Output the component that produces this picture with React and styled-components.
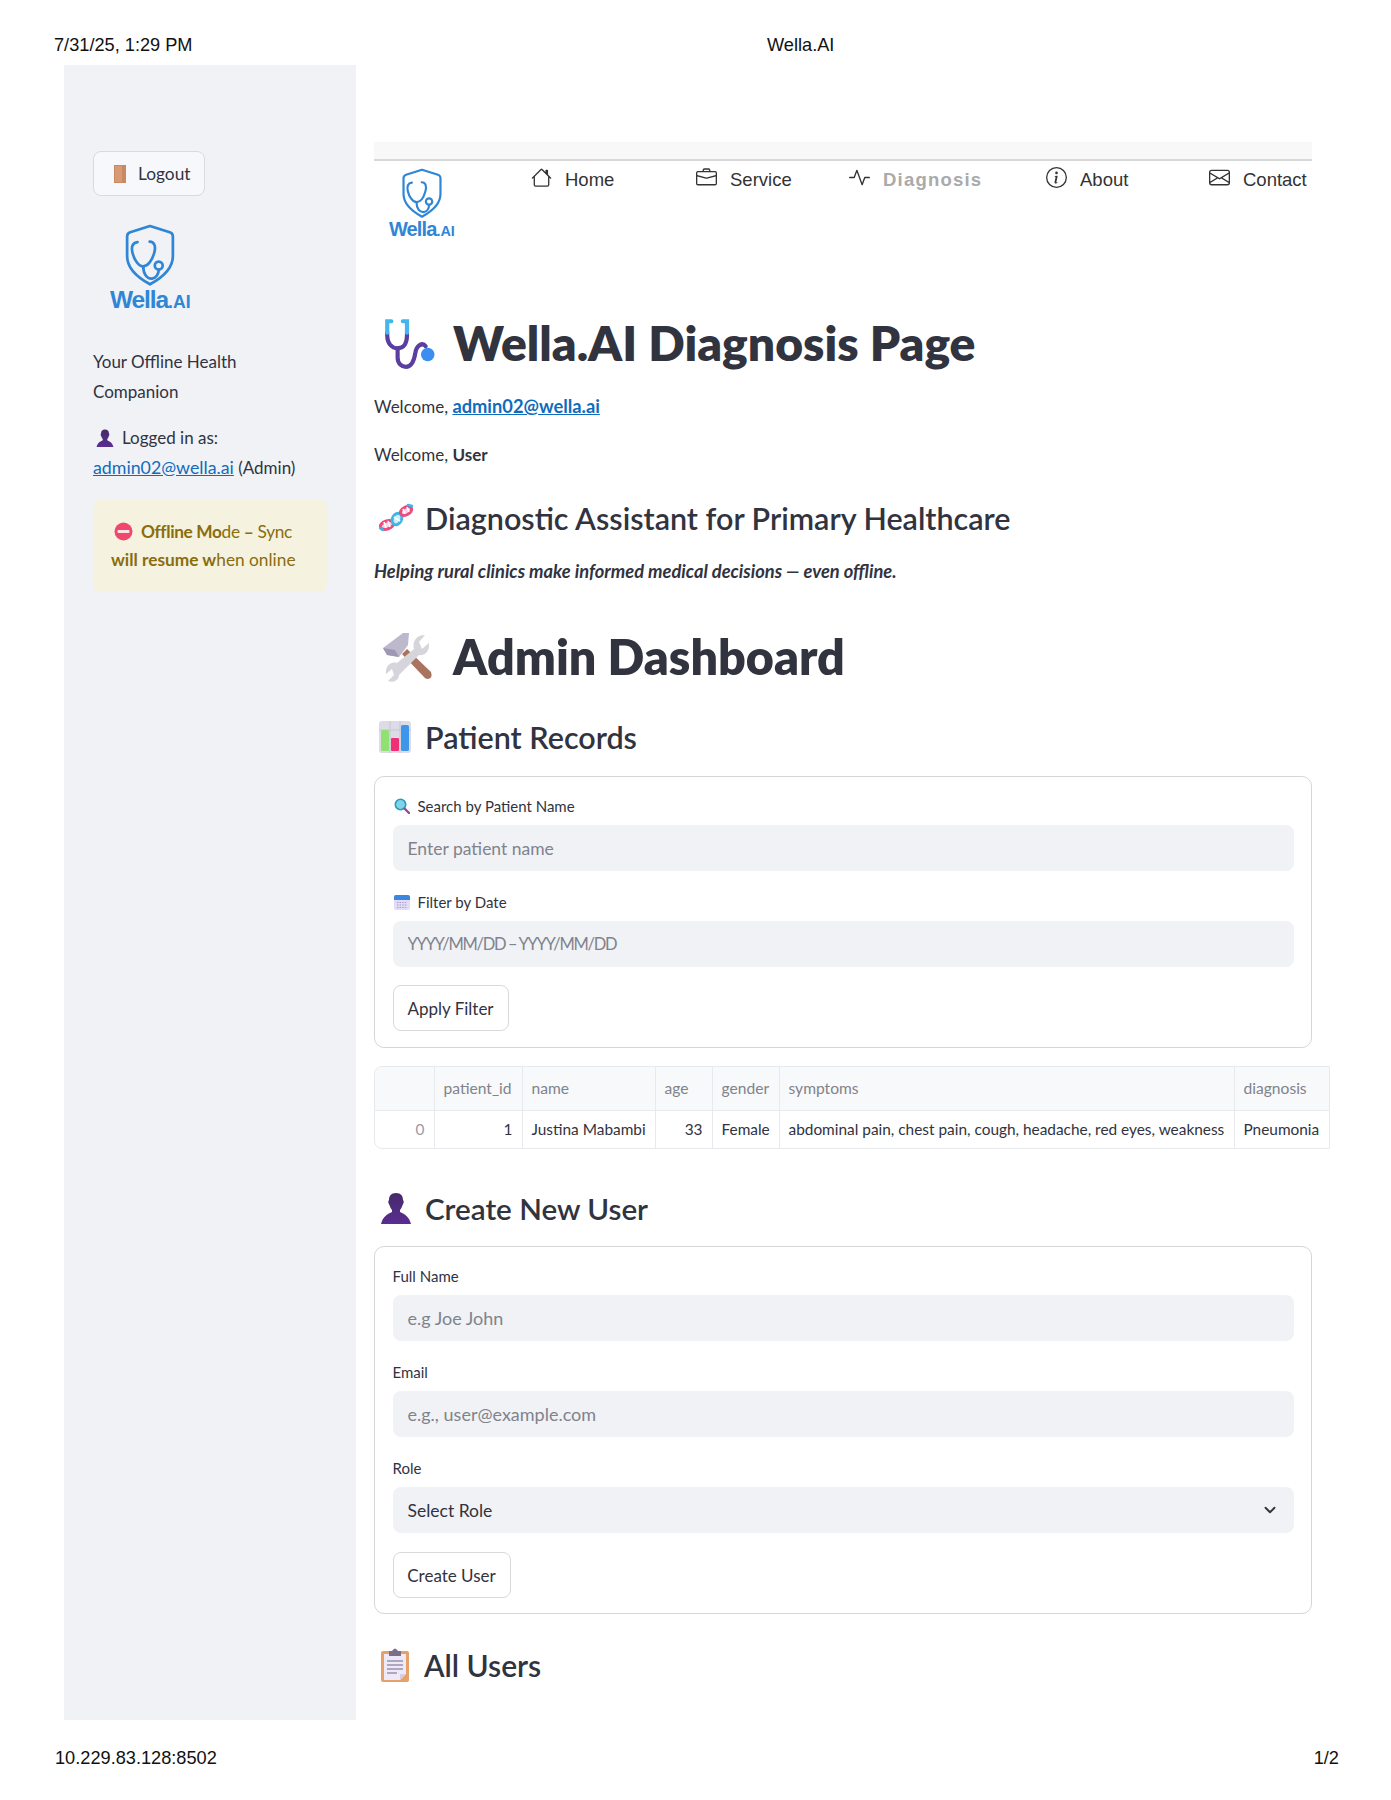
import React from "react";
import styled, { createGlobalStyle } from "styled-components";
import { BsHouse, BsBriefcase, BsActivity, BsInfoCircle, BsEnvelope } from "react-icons/bs";
import { ChevronDown } from "lucide-react";

const GlobalStyle = createGlobalStyle`
  html, body {
    margin: 0;
    padding: 0;
    background: #fff;
    color: #31333f;
    font-family: "Lato", "Noto Sans", sans-serif;
  }
  * { box-sizing: border-box; }
`;

const Page = styled.div`
  width: 1391px;
  height: 1800px;
  overflow: hidden;
`;

const PrintBar = styled.div`
  height: 65px;
  padding: 34px 0 0 54px;
  display: grid;
  grid-template-columns: 713px auto;
  font: 18.2px/22px "Liberation Sans", Arial, sans-serif;
  color: #111;
`;

const PrintFoot = styled.div`
  margin-top: 27px;
  padding: 0 52px 0 55px;
  display: flex;
  justify-content: space-between;
  font: 18.2px/22px "Liberation Sans", Arial, sans-serif;
  color: #111;
`;

const Shell = styled.div`
  margin-left: 64px;
  display: flex;
  height: 1655px;
`;

const Sidebar = styled.aside`
  width: 292px;
  flex: none;
  background: #f0f2f6;
  padding: 86px 29px 0;
  font-size: 17px;
  line-height: 30px;
`;

const LogoutButton = styled.button`
  display: flex;
  align-items: center;
  gap: 12px;
  width: 112px;
  height: 45px;
  padding: 0 0 0 20px;
  background: #f7f8fb;
  border: 1px solid #d9dae0;
  border-radius: 8px;
  color: #31333f;
  font: 17.3px "Lato", sans-serif;
`;

const LogoBox = styled.div`
  display: inline-flex;
  flex-direction: column;
  align-items: center;
  margin: ${(p) => p.$margin};
  color: #2f86d6;
  font-family: "Liberation Sans", Arial, sans-serif;
  font-weight: 700;
  font-size: ${(p) => p.$size}px;
  line-height: 1.15;
  letter-spacing: -0.045em;
`;

const LogoAi = styled.span`
  font-size: 0.72em;
  letter-spacing: 0;
`;

const SideText = styled.p`
  margin: ${(p) => p.$top}px 0 0;
`;

const RowIcon = styled.span`
  display: inline-block;
  line-height: 0;
  vertical-align: -3px;
  margin: 0 8px 0 3px;
  svg { display: block; }
`;

const TextLink = styled.a`
  color: #0f6cbd;
  text-decoration: underline;
  font-size: ${(p) => p.$size}px;
  line-height: 1;
  font-weight: ${(p) => (p.$strong ? 700 : 400)};
`;

const OfflineBox = styled.div`
  margin-top: 17px;
  height: 92px;
  padding: 18px 18px;
  background: #f5f2df;
  border-radius: 8px;
  color: #8a6d0c;
  font-size: 17.3px;
  line-height: 28px;
`;

const OfflineLead = styled.span`
  letter-spacing: -0.35px;
`;

const Main = styled.main`
  width: 956px;
  margin-left: 18px;
  padding-top: 77px;
`;

const TopStrip = styled.div`
  width: 938px;
  height: 19px;
  background: #f8f8f8;
  border-bottom: 2px solid #d8d8d8;
`;

const NavRow = styled.nav`
  width: 938px;
  height: 151px;
  display: grid;
  grid-template-columns: 157px 165px 153px 197px 163px 1fr;
  font: 18.5px/22px "Liberation Sans", Arial, sans-serif;
  color: #333;
`;

const NavLogo = styled.div`
  padding: 7px 0 0 15px;
`;

const NavItem = styled.a`
  display: flex;
  align-items: flex-start;
  gap: 13px;
  height: 40px;
  padding-top: 8px;
  color: ${(p) => (p.$active ? "#aaa" : "#333")};
  font-weight: ${(p) => (p.$active ? 700 : 400)};
  letter-spacing: ${(p) => (p.$active ? "1.2px" : 0)};
  svg { color: #333; flex: none; margin-top: -2px; }
`;

const Heading = styled.h1`
  display: flex;
  align-items: center;
  height: ${(p) => p.$height}px;
  margin: ${(p) => p.$top}px 0 0;
  padding-left: ${(p) => p.$indent}px;
  gap: ${(p) => p.$gap}px;
  font-size: ${(p) => p.$size}px;
  font-weight: ${(p) => p.$weight};
  color: #31333f;
  white-space: nowrap;
`;

const Line = styled.p`
  margin: ${(p) => p.$top}px 0 0;
  font-size: ${(p) => (p.$italic ? 18.3 : 17)}px;
  line-height: 28px;
  font-style: ${(p) => (p.$italic ? "italic" : "normal")};
  font-weight: ${(p) => (p.$italic ? 700 : 400)};
`;

const Card = styled.section`
  width: 938px;
  height: ${(p) => p.$height}px;
  margin-top: ${(p) => p.$top}px;
  padding: ${(p) => p.$pad}px 17px 0 17.5px;
  border: 1.5px solid #d5d6da;
  border-radius: 10px;
`;

const Label = styled.label`
  display: flex;
  align-items: center;
  gap: 8px;
  height: 22px;
  margin-bottom: 8px;
  padding-left: ${(p) => (p.$icon ? 1 : 0)}px;
  font-size: 15px;
`;

const Field = styled.div`
  margin-bottom: ${(p) => p.$gap}px;
`;

const TextInput = styled.input`
  display: block;
  width: 100%;
  height: 46px;
  padding: 0 15px;
  border: 0;
  outline: 0;
  border-radius: 8px;
  background: #f0f2f6;
  color: #31333f;
  font: ${(p) => p.$size || 18}px "Lato", sans-serif;
  letter-spacing: ${(p) => p.$spacing || 0}px;
  &::placeholder { color: #80838c; opacity: 1; }
`;

const SelectBox = styled.div`
  display: flex;
  align-items: center;
  justify-content: space-between;
  height: 46px;
  padding: 0 15px;
  border-radius: 8px;
  background: #f0f2f6;
  font-size: 17.5px;
`;

const PlainButton = styled.button`
  display: block;
  width: ${(p) => p.$width}px;
  height: 46px;
  padding: 0;
  background: #fff;
  border: 1.5px solid #d8d9dd;
  border-radius: 8px;
  color: #31333f;
  font: 17px "Lato", sans-serif;
`;

const TableWrap = styled.div`
  width: 956px;
  margin-top: 18px;
  border: 1px solid #e7e9ed;
  border-radius: 8px 0 0 8px;
  overflow: hidden;
`;

const Table = styled.table`
  width: 955px;
  table-layout: fixed;
  border-collapse: collapse;
`;

const Th = styled.th`
  height: 43px;
  padding: 0 9px;
  background: #f7f9fb;
  border-right: 1px solid #e7e9ed;
  border-bottom: 1px solid #e7e9ed;
  color: #80838c;
  font-size: 15.6px;
  font-weight: 400;
  text-align: left;
  white-space: nowrap;
  &:last-child { border-right: 0; }
`;

const Td = styled.td`
  height: 38px;
  padding: 0 9px;
  border-right: 1px solid #e7e9ed;
  color: ${(p) => (p.$muted ? "#9a9ca4" : "#31333f")};
  font-size: 15.4px;
  text-align: ${(p) => (p.$right ? "right" : "left")};
  white-space: nowrap;
  &:last-child { border-right: 0; }
`;

const Shield = ({ width }) => (
  <svg width={width} viewBox="0 0 50 60" fill="none" stroke="#2f86d6" strokeWidth="2.6" strokeLinecap="round" strokeLinejoin="round">
    <path d="M25 2 L44 8 Q47 9 47 12 V31 C47 43 36 52 25 58 C14 52 3 43 3 31 V12 Q3 9 6 8 Z" />
    <path d="M13 17.5 C8 18 7 22 8 27 C9.5 34 14 40.7 18.5 40.7 C23 40.7 27 35 29 28 C31 21 29 17 24.7 17" />
    <path d="M18.5 40.7 C18.5 48 22 53 27 52.5 C31 52 33.4 48 33.4 44" />
    <circle cx="33.4" cy="40" r="3.8" />
  </svg>
);

const Logo = ({ width, size, margin }) => (
  <LogoBox $size={size} $margin={margin}>
    <Shield width={width} />
    <span>
      Wella<LogoAi>.AI</LogoAi>
    </span>
  </LogoBox>
);

const DoorIcon = () => (
  <svg width="12" height="18" viewBox="0 0 12 18">
    <rect width="12" height="18" fill="#c98a62" />
    <rect x="1" y="1" width="7" height="16" fill="#d79a74" />
  </svg>
);

const PersonIcon = ({ size }) => (
  <svg width={size} height={size} viewBox="0 0 32 32">
    <defs>
      <linearGradient id="personFill" x1="0" y1="0" x2="0" y2="1">
        <stop offset="0" stopColor="#452a6b" />
        <stop offset="1" stopColor="#5a2d8f" />
      </linearGradient>
    </defs>
    <path
      fill="url(#personFill)"
      d="M16 1 C21 1 23 4 23 8 C24 9 24 11 23 12 C22 15 21 17 20 18 V20 C24 22 29 24 31 32 H1 C3 24 8 22 12 20 V18 C11 17 10 15 9 12 C8 11 8 9 9 8 C9 4 11 1 16 1 Z"
    />
  </svg>
);

const NoEntryIcon = () => (
  <svg width="19" height="19" viewBox="0 0 19 19">
    <circle cx="9.5" cy="9.5" r="9" fill="#f0476e" />
    <rect x="3.5" y="8" width="12" height="3" rx="1" fill="#fbe3e6" />
  </svg>
);

const StethIcon = () => (
  <svg width="54" height="54" viewBox="8 5 52 52" fill="none" strokeLinecap="round">
    <path d="M14 22 V25 C14 32 18 37 24 37 C30 37 33 32 33 25 V22" stroke="#5b3fa0" strokeWidth="4" />
    <path d="M14 22 V11 H18 M33 22 V11 H29" stroke="#45b5ee" strokeWidth="4" />
    <path d="M24 37 V46 C24 52 28 55 32 55 C38 55 40 48 41 42 C42 34 48 31 51 35" stroke="#5b3fa0" strokeWidth="4" />
    <circle cx="53" cy="43" r="6.5" fill="#3b8df2" />
  </svg>
);

const DnaIcon = () => (
  <svg width="34" height="32" viewBox="0 0 34 32" fill="none">
    <ellipse cx="8" cy="23" rx="7" ry="4" transform="rotate(-20 8 23)" stroke="#ef4a7d" strokeWidth="3" fill="#f9d3df" />
    <ellipse cx="18" cy="17" rx="6" ry="4.5" transform="rotate(-60 18 17)" stroke="#3fb6e8" strokeWidth="3" fill="#cdeefa" />
    <ellipse cx="27" cy="9" rx="6" ry="3.8" transform="rotate(-30 27 9)" stroke="#ef4a7d" strokeWidth="3" fill="#f9d3df" />
    <path d="M5 20 L7 26 M9 19 L11 25 M15 15 L21 19 M24 7 L26 12 M28 5 L30 10" stroke="#fff" strokeWidth="1.6" />
    <path d="M29 3 L33 4 M1 26 L4 28" stroke="#3fb6e8" strokeWidth="2.6" strokeLinecap="round" />
  </svg>
);

const ToolsIcon = () => (
  <svg width="54" height="54" viewBox="6 4 54 54">
    <path d="M27 29 L32 24 L56 47 Q58 53 53 54 Q50 54 49 52 Z" fill="#a9745f" />
    <path d="M8 23 L28 8 L34 8 L33 20 L24 32 L12 30 Z" fill="#bdb8cc" />
    <path d="M8 23 L12 30 L24 32 L20 25 Z" fill="#9e99b2" />
    <path
      d="M39 24 C37 17 41 10 50 10 L44 17 L47 24 L54 18 C55 26 50 31 44 30 L24 50 C24 55 19 58 13 56 L19 50 L17 44 L11 49 C10 42 15 36 22 38 Z"
      fill="#d6d5dc"
    />
  </svg>
);

const ChartIcon = () => (
  <svg width="32" height="32" viewBox="0 0 32 32">
    <rect width="32" height="32" rx="3" fill="#dcdbe6" />
    <path d="M11 0 V32 M21 0 V32 M0 9 H32" stroke="#c6c5d4" strokeWidth="1" />
    <rect x="2" y="9" width="8" height="21" rx="1.5" fill="#8fe26f" />
    <rect x="12" y="17" width="8" height="13" rx="1" fill="#ee2f76" />
    <rect x="22" y="4" width="8" height="26" rx="1.5" fill="#3d96ea" />
  </svg>
);

const SearchIcon = () => (
  <svg width="16" height="16" viewBox="0 0 16 16" fill="none">
    <circle cx="6.5" cy="6.5" r="5.2" fill="#7fd3ea" stroke="#2d9bb8" strokeWidth="1.6" />
    <path d="M10.5 10.5 L15 15" stroke="#8e4a9c" strokeWidth="2.4" strokeLinecap="round" />
  </svg>
);

const CalendarIcon = () => (
  <svg width="16" height="16" viewBox="0 0 16 16">
    <rect y="1" width="16" height="15" rx="2" fill="#e3dcf5" />
    <path d="M0 6 V3 Q0 1 2 1 H14 Q16 1 16 3 V6 Z" fill="#3d86e0" />
    <path d="M3 8.5 H13 M3 11 H13 M3 13.5 H13" stroke="#a79ad0" strokeWidth="1.2" strokeDasharray="1.4 1.2" />
  </svg>
);

const ClipboardIcon = () => (
  <svg width="30" height="34" viewBox="0 0 30 34">
    <rect x="1" y="3" width="28" height="31" rx="2" fill="#e6a06a" />
    <path d="M4 6 H26 V26 L20 32 H4 Z" fill="#eee9f6" />
    <path d="M20 32 L26 26 H20 Z" fill="#d5cde4" />
    <path d="M9 3 H12 Q15 -2 18 3 H21 V8 H9 Z" fill="#7b6f8e" />
    <path d="M7 13 H23 M7 17 H23 M7 21 H23 M7 25 H17" stroke="#9a90b0" strokeWidth="1.4" />
  </svg>
);

const navItems = [
  { label: "Home", Icon: BsHouse },
  { label: "Service", Icon: BsBriefcase },
  { label: "Diagnosis", Icon: BsActivity, active: true },
  { label: "About", Icon: BsInfoCircle },
  { label: "Contact", Icon: BsEnvelope },
];

const columns = [
  ["", 59],
  ["patient_id", 88],
  ["name", 133],
  ["age", 57],
  ["gender", 67],
  ["symptoms", 455],
  ["diagnosis", 96],
];

const App = () => (
  <Page>
    <GlobalStyle />
    <PrintBar>
      <span>7/31/25, 1:29 PM</span>
      <span>Wella.AI</span>
    </PrintBar>
    <Shell>
      <Sidebar>
        <LogoutButton>
          <DoorIcon />
          Logout
        </LogoutButton>
        <Logo width={52} size={24.5} margin="28px 0 0 17px" />
        <SideText $top={32}>
          Your Offline Health
          <br />
          Companion
        </SideText>
        <SideText $top={16}>
          <RowIcon>
            <PersonIcon size={18} />
          </RowIcon>
          Logged in as:
          <br />
          <TextLink href="#" $size={17.8}>admin02@wella.ai</TextLink> (Admin)
        </SideText>
        <OfflineBox>
          <RowIcon>
            <NoEntryIcon />
          </RowIcon>
          <OfflineLead>
            <b>Offline Mo</b>de <b>–</b> Sync
          </OfflineLead>
          <br />
          <b>will resume w</b>hen online
        </OfflineBox>
      </Sidebar>
      <Main>
        <TopStrip />
        <NavRow>
          <NavLogo>
            <Logo width={42} size={20} margin="0" />
          </NavLogo>
          {navItems.map(({ label, Icon, active }) => (
            <NavItem key={label} $active={active}>
              <Icon size={21} />
              {label}
            </NavItem>
          ))}
        </NavRow>
        <Heading $height={60} $top={0} $indent={7} $gap={18} $size={48} $weight={800}>
          <StethIcon />
          Wella.AI Diagnosis Page
        </Heading>
        <Line $top={21}>
          Welcome, <TextLink href="#" $strong $size={18.3}>admin02@wella.ai</TextLink>
        </Line>
        <Line $top={20}>
          Welcome, <b>User</b>
        </Line>
        <Heading $height={44} $top={27} $indent={5} $gap={12} $size={30.5} $weight={600} as="h3">
          <DnaIcon />
          Diagnostic Assistant for Primary Healthcare
        </Heading>
        <Line $top={17} $italic>
          Helping rural clinics make informed medical decisions — even offline.
        </Line>
        <Heading $height={60} $top={41} $indent={7} $gap={18} $size={48.4} $weight={800}>
          <ToolsIcon />
          Admin Dashboard
        </Heading>
        <Heading $height={44} $top={29} $indent={5} $gap={14} $size={30.5} $weight={600} as="h3">
          <ChartIcon />
          Patient Records
        </Heading>
        <Card $height={272} $top={17} $pad={18}>
          <Field $gap={20}>
            <Label $icon>
              <SearchIcon />
              Search by Patient Name
            </Label>
            <TextInput $size={17.5} placeholder="Enter patient name" />
          </Field>
          <Field $gap={18}>
            <Label $icon>
              <CalendarIcon />
              Filter by Date
            </Label>
            <TextInput $size={16.5} $spacing={-1.3} placeholder="YYYY/MM/DD – YYYY/MM/DD" />
          </Field>
          <PlainButton $width={116}>Apply Filter</PlainButton>
        </Card>
        <TableWrap>
          <Table>
            <colgroup>
              {columns.map(([name, width]) => (
                <col key={name} width={width} />
              ))}
            </colgroup>
            <thead>
              <tr>
                {columns.map(([name]) => (
                  <Th key={name}>{name}</Th>
                ))}
              </tr>
            </thead>
            <tbody>
              <tr>
                <Td $right $muted>0</Td>
                <Td $right>1</Td>
                <Td>Justina Mabambi</Td>
                <Td $right>33</Td>
                <Td>Female</Td>
                <Td>abdominal pain, chest pain, cough, headache, red eyes, weakness</Td>
                <Td>Pneumonia</Td>
              </tr>
            </tbody>
          </Table>
        </TableWrap>
        <Heading $height={44} $top={37} $indent={6} $gap={13} $size={29.6} $weight={600} as="h3">
          <PersonIcon size={32} />
          Create New User
        </Heading>
        <Card $height={368} $top={16} $pad={18}>
          <Field $gap={20}>
            <Label>Full Name</Label>
            <TextInput placeholder="e.g Joe John" />
          </Field>
          <Field $gap={20}>
            <Label>Email</Label>
            <TextInput placeholder="e.g., user@example.com" />
          </Field>
          <Field $gap={19}>
            <Label>Role</Label>
            <SelectBox>
              Select Role
              <ChevronDown size={18} strokeWidth={2.5} />
            </SelectBox>
          </Field>
          <PlainButton $width={118}>Create User</PlainButton>
        </Card>
        <Heading $height={44} $top={29} $indent={6} $gap={14} $size={30} $weight={600} as="h3">
          <ClipboardIcon />
          All Users
        </Heading>
      </Main>
    </Shell>
    <PrintFoot>
      <span>10.229.83.128:8502</span>
      <span>1/2</span>
    </PrintFoot>
  </Page>
);

export default App;
